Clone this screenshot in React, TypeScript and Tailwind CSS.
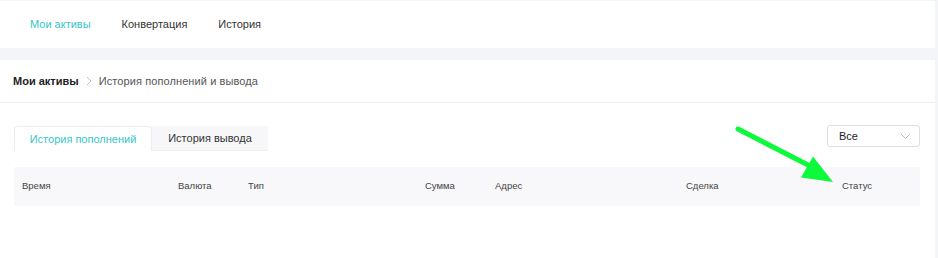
export default function App() {
  const cols = ["Время", "Валюта", "Тип", "Сумма", "Адрес", "Сделка", "Статус"];

  return (
    <div
      className="relative w-[938px] h-[258px] bg-[#f4f5f9] pt-px pr-[3px] text-[11px] text-[#333]"
      style={{ fontFamily: '"Liberation Sans", Arial, sans-serif' }}
    >
      <nav className="flex items-center h-[47px] bg-white pl-[30px] gap-[31px]">
        <span className="text-[#36c6c6]">Мои активы</span>
        <span>Конвертация</span>
        <span>История</span>
      </nav>

      <div className="mt-[12px] bg-white h-[198px]">
        <div className="flex items-center h-[43px] px-[13px] border-b border-[#efefef]">
          <span className="font-bold text-[#222]">Мои активы</span>
          <svg className="mx-[6px]" width="8" height="10" viewBox="0 0 8 10">
            <path d="M2 1l4 4-4 4" fill="none" stroke="#c4c4c4" strokeWidth="1" />
          </svg>
          <span className="text-[#555] tracking-[0.1px]">История пополнений и вывода</span>
        </div>

        <div className="px-[14px] pr-[15px]">
          <div className="flex items-start justify-between mt-[22px]">
            <div className="flex mt-px">
              <div className="w-[138px] h-[25px] flex items-center justify-center bg-white border border-b-0 border-[#ededed] rounded-t-[3px] text-[#36c6c6]">
                История пополнений
              </div>
              <div className="w-[116px] h-[25px] flex items-center justify-center bg-[#f7f7f9] border-b border-[#eeeeee]">
                История вывода
              </div>
            </div>
            <div className="w-[93px] h-[22px] flex items-center justify-between border border-[#dedede] rounded-[3px] pl-[11px] pr-[8px] text-[#222]">
              <span>Все</span>
              <svg width="11" height="7" viewBox="0 0 11 7">
                <path d="M1 1l4.5 4.5L10 1" fill="none" stroke="#bbbbbb" strokeWidth="1" />
              </svg>
            </div>
          </div>

          <div className="mt-[16px] h-[39px] bg-[#f8f8fa] pl-[8px] grid grid-cols-[156px_70px_177px_70px_191px_156px_1fr] items-center text-[9.5px] text-[#444]">
            {cols.map((c) => (
              <span key={c}>{c}</span>
            ))}
          </div>
        </div>
      </div>

      <svg className="absolute left-0 top-0 pointer-events-none" width="938" height="258">
        <line x1="738" y1="129" x2="810" y2="166" stroke="#0dfa3c" strokeWidth="5" strokeLinecap="round" />
        <polygon points="833,182 801,177.5 813,156.5" fill="#0dfa3c" />
      </svg>
    </div>
  );
}
